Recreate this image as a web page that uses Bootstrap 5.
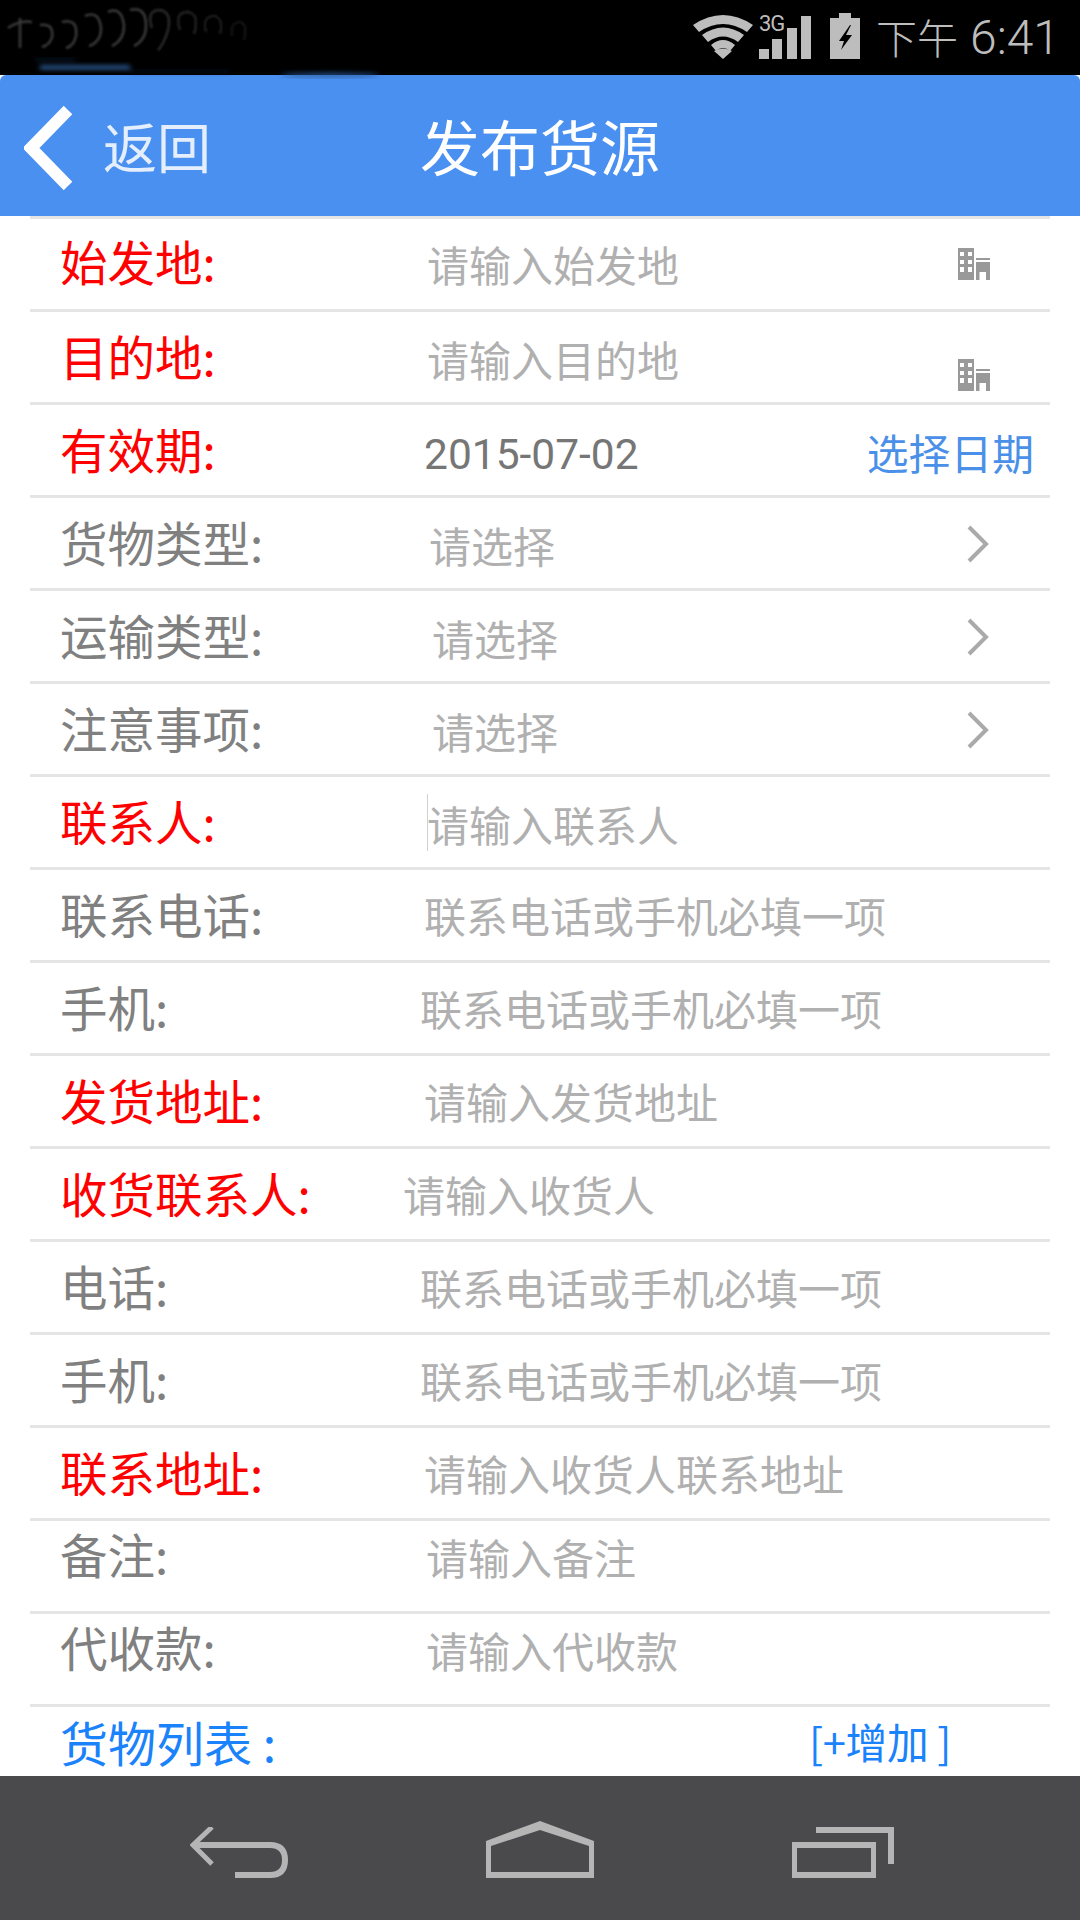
<!DOCTYPE html>
<html lang="zh-CN">
<head>
  <meta charset="UTF-8" />
  <title>发布货源</title>
  <link href="https://cdn.jsdelivr.net/npm/bootstrap@5.3.3/dist/css/bootstrap.min.css" rel="stylesheet">
  <style>
    html, body { width: 1080px; height: 1920px; overflow: hidden; background: #fff; }
    body { font-family: "Noto Sans CJK SC", "Liberation Sans", sans-serif; }

    .status-strip { height: 75px; background: #000; color: #bdbdbd; }
    .ghost-mark { left: 0; top: 0; }
    .wifi-ico { margin-right: 6px; }
    .net-lbl { font-family: "Roboto", sans-serif; font-size: 22px; line-height: 22px; width: 24px; margin-top: 13px; letter-spacing: -1px; }
    .sig-ico { margin-left: -24px; margin-right: 19px; }
    .bat-ico { margin-right: 16px; }
    .clock-txt { font-family: "Roboto", "Noto Sans CJK SC", sans-serif; font-weight: 300; font-size: 48px; line-height: 75px; width: 204px; white-space: nowrap; }
    .clock-cjk { font-size: 41px; margin-right: 12px; }

    .app-head { height: 141px; background: #4a90f0; border-radius: 6px 6px 0 0; color: #fff; }
    .head-side { width: 300px; }
    .back-arrow { margin-left: 24px; margin-top: 4px; }
    .back-txt { font-size: 54px; line-height: 1; margin-left: 29px; color: rgba(255, 255, 255, .85); }
    .head-title { font-size: 60px; line-height: 1; width: 480px; margin-bottom: 2px; }

    .form-wrap { height: 1560px; overflow: hidden; margin: 0 30px; }
    .fld-row { height: 93px; border-top: 3px solid #e5e5e5; padding-left: 30px; }
    .fld-lbl { width: 343px; font-size: 47.5px; line-height: 1; color: #808080; white-space: nowrap; margin-bottom: 3px; }
    .fld-lbl.must { color: #f00; }
    .fld-val { font-size: 42px; line-height: 1; color: #b0b0b0; white-space: nowrap; margin-top: 0; }
    .fld-val.filled { font-family: "Roboto", sans-serif; color: #767676; font-size: 42.5px; margin-top: 10px; }
    .caret-bar { left: 397px; top: 17px; width: 1px; height: 57px; background: #d0d0d0; }
    .pick-lnk { color: #4a90e8; font-size: 41.8px; line-height: 1; margin-top: 6px; }
    .blue-lbl { color: #1a82fb; font-size: 48px; margin-bottom: 0; }
    .add-lnk { color: #1a82fb; font-size: 41.8px; line-height: 1; letter-spacing: -.4px; margin-right: 99px; margin-top: 4px; }

    .off17 { margin-left: 17px; } .off21 { margin-left: 21px; } .off23 { margin-left: 23px; }
    .off24 { margin-left: 24px; } .off26 { margin-left: 26px; } .off29 { margin-left: 29px; }
    .nudge { margin-top: 4px; }
    .first-lbl { margin-bottom: 6px; }
    .first-val { margin-top: 0; }
    .lift-lbl { margin-top: -24px; margin-bottom: 0; }
    .lift-val { margin-top: -19px; }
    .end-ico { margin-right: 60px; }
    .chev-ico { margin-top: 2px; }
    .bld-low { margin-top: 35px; }
    .bld-top { margin-top: 0; }
    .cut-row { height: 72px; align-items: flex-start !important; padding-top: 10px; }

    .sys-nav { height: 144px; background: #4a4a4c; }
    .sys-back { margin-left: 190px; margin-top: 51px; }
    .sys-home { margin-left: 197px; margin-top: 45px; }
    .sys-rec { margin-left: 198px; margin-top: 51px; }
  </style>
</head>
<body class="d-flex flex-column">

<div class="status-strip d-flex justify-content-end align-items-start position-relative">
  <svg class="ghost-mark position-absolute" width="400" height="80" viewBox="0 0 400 80">
    <defs>
      <filter id="soft"><feGaussianBlur stdDeviation="1.2"/></filter>
      <filter id="softer"><feGaussianBlur stdDeviation="2.5"/></filter>
    </defs>
    <g fill="none" stroke="#3a3a3a" stroke-width="2.5" filter="url(#soft)">
      <path d="M8 28 q12 -8 24 -6 M20 18 v30"/>
      <path d="M40 25 q14 -2 12 12 q-2 8 -10 10"/>
      <path d="M62 22 q16 -4 14 14 q-2 10 -10 12"/>
      <path d="M85 16 q14 -6 16 12 q0 14 -12 18"/>
      <path d="M108 12 q14 -6 16 14 q0 14 -12 20"/>
      <path d="M130 10 q16 -4 16 16 q0 14 -12 20"/>
      <path d="M152 28 q-6 -18 8 -18 q12 2 8 20 q-4 14 -10 20" stroke="#2c2c2c"/>
      <path d="M180 30 q-6 -18 8 -18 q12 2 6 22" stroke="#222"/>
      <path d="M206 32 q-4 -16 8 -16 q10 2 6 18" stroke="#1c1c1c"/>
      <path d="M232 36 q-2 -14 8 -14 q8 2 4 18" stroke="#141414"/>
    </g>
    <g filter="url(#softer)">
      <rect x="40" y="66" width="90" height="3" fill="#3d7fd0"/>
      <rect x="35" y="59" width="40" height="1" fill="#1c3c6c"/>
      <rect x="130" y="71" width="100" height="1" fill="#12294a"/>
      <ellipse cx="330" cy="75" rx="50" ry="2" fill="#2a5a9a"/>
    </g>
  </svg>
  <svg class="wifi-ico" width="60" height="75" viewBox="0 0 60 75">
    <g fill="#bdbdbd">
      <path d="M0 25 Q30 5 60 25 L54 32 Q30 16 6 32 Z"/>
      <path d="M9 35 Q30 20 51 35 L45 42 Q30 31 15 42 Z"/>
      <path d="M18 45 Q30 35 42 45 L37 51 Q30 45 23 51 Z"/>
      <path d="M21 51 Q30 46 39 51 L30 59 Z" />
    </g>
  </svg>
  <div class="net-lbl">3G</div>
  <svg class="sig-ico" width="52" height="75" viewBox="0 0 52 75">
    <g fill="#bdbdbd">
      <rect x="0" y="49" width="10" height="10"/>
      <rect x="13" y="39" width="10" height="20"/>
      <rect x="28" y="28" width="10" height="31"/>
      <rect x="42" y="16" width="10" height="43"/>
    </g>
  </svg>
  <svg class="bat-ico" width="30" height="75" viewBox="0 0 30 75">
    <path fill="#bdbdbd" d="M9 13 H21 V18 H30 V59 H0 V18 H9 Z"/>
    <path fill="#000" d="M20 25 L9 41 H14 L11 50 L22 35 H16 L21 25 Z"/>
  </svg>
  <div class="clock-txt"><span class="clock-cjk">下午</span>6:41</div>
</div>

<div class="app-head d-flex align-items-center">
  <div class="head-side d-flex align-items-center">
    <svg class="back-arrow" width="50" height="84" viewBox="0 0 50 84">
      <path d="M44 4 L7 42 L44 80" fill="none" stroke="#fff" stroke-width="12"/>
    </svg>
    <span class="back-txt">返回</span>
  </div>
  <div class="head-title text-center">发布货源</div>
</div>

<div class="form-wrap">
  <div class="fld-row d-flex align-items-center">
    <div class="fld-lbl first-lbl must">始发地:</div>
    <div class="fld-val first-val off24 flex-grow-1">请输入始发地</div>
    <svg class="end-ico bld-top" width="32" height="32" viewBox="0 0 32 32"><use href="#bld"/></svg>
  </div>
  <div class="fld-row d-flex align-items-center">
    <div class="fld-lbl must">目的地:</div>
    <div class="fld-val nudge off24 flex-grow-1">请输入目的地</div>
    <svg class="end-ico bld-low" width="32" height="32" viewBox="0 0 32 32"><use href="#bld"/></svg>
  </div>
  <div class="fld-row d-flex align-items-center">
    <div class="fld-lbl must">有效期:</div>
    <div class="fld-val filled off21 flex-grow-1">2015-07-02</div>
    <a class="pick-lnk text-decoration-none me-3">选择日期</a>
  </div>
  <div class="fld-row d-flex align-items-center">
    <div class="fld-lbl">货物类型:</div>
    <div class="fld-val nudge off26 flex-grow-1">请选择</div>
    <svg class="end-ico chev-ico" width="24" height="38" viewBox="0 0 24 38"><path d="M3 2 L20 19 L3 36" fill="none" stroke="#aaa" stroke-width="4"/></svg>
  </div>
  <div class="fld-row d-flex align-items-center">
    <div class="fld-lbl">运输类型:</div>
    <div class="fld-val nudge off29 flex-grow-1">请选择</div>
    <svg class="end-ico chev-ico" width="24" height="38" viewBox="0 0 24 38"><path d="M3 2 L20 19 L3 36" fill="none" stroke="#aaa" stroke-width="4"/></svg>
  </div>
  <div class="fld-row d-flex align-items-center">
    <div class="fld-lbl">注意事项:</div>
    <div class="fld-val nudge off29 flex-grow-1">请选择</div>
    <svg class="end-ico chev-ico" width="24" height="38" viewBox="0 0 24 38"><path d="M3 2 L20 19 L3 36" fill="none" stroke="#aaa" stroke-width="4"/></svg>
  </div>
  <div class="fld-row d-flex align-items-center position-relative">
    <div class="fld-lbl must">联系人:</div>
    <div class="fld-val nudge off24">请输入联系人</div>
    <span class="caret-bar position-absolute"></span>
  </div>
  <div class="fld-row d-flex align-items-center">
    <div class="fld-lbl">联系电话:</div>
    <div class="fld-val off21">联系电话或手机必填一项</div>
  </div>
  <div class="fld-row d-flex align-items-center">
    <div class="fld-lbl">手机:</div>
    <div class="fld-val off17">联系电话或手机必填一项</div>
  </div>
  <div class="fld-row d-flex align-items-center">
    <div class="fld-lbl must">发货地址:</div>
    <div class="fld-val off21">请输入发货地址</div>
  </div>
  <div class="fld-row d-flex align-items-center">
    <div class="fld-lbl must">收货联系人:</div>
    <div class="fld-val">请输入收货人</div>
  </div>
  <div class="fld-row d-flex align-items-center">
    <div class="fld-lbl">电话:</div>
    <div class="fld-val off17">联系电话或手机必填一项</div>
  </div>
  <div class="fld-row d-flex align-items-center">
    <div class="fld-lbl">手机:</div>
    <div class="fld-val off17">联系电话或手机必填一项</div>
  </div>
  <div class="fld-row d-flex align-items-center">
    <div class="fld-lbl must">联系地址:</div>
    <div class="fld-val off21">请输入收货人联系地址</div>
  </div>
  <div class="fld-row d-flex align-items-center">
    <div class="fld-lbl lift-lbl">备注:</div>
    <div class="fld-val off23 lift-val">请输入备注</div>
  </div>
  <div class="fld-row d-flex align-items-center">
    <div class="fld-lbl lift-lbl">代收款:</div>
    <div class="fld-val off23 lift-val">请输入代收款</div>
  </div>
  <div class="fld-row cut-row d-flex justify-content-between">
    <div class="fld-lbl blue-lbl">货物列表 :</div>
    <a class="add-lnk text-decoration-none">[+增加 ]</a>
  </div>
</div>

<div class="sys-nav d-flex align-items-start">
  <svg class="sys-back" width="99" height="51" viewBox="0 0 99 51">
    <g fill="none" stroke="#b5b5b5">
      <path d="M22 0 L3 18 L22 37" stroke-width="5"/>
      <path d="M4 18 H80 Q95 18 95 33 Q95 48 80 48 H45" stroke-width="6"/>
    </g>
  </svg>
  <svg class="sys-home" width="108" height="57" viewBox="0 0 108 57">
    <path fill="#b5b5b5" fill-rule="evenodd" d="M54 0 L108 20 V57 H0 V20 Z M54 9 L103 25 V51 H5 V25 Z"/>
  </svg>
  <svg class="sys-rec" width="102" height="51" viewBox="0 0 102 51">
    <path fill="#b5b5b5" d="M24 0 H102 V37 H96 V6 H24 Z"/>
    <path fill="#b5b5b5" fill-rule="evenodd" d="M0 15 H84 V51 H0 Z M5 21 V45 H79 V21 Z"/>
  </svg>
</div>

<svg width="0" height="0" class="position-absolute">
  <defs>
    <g id="bld">
      <path fill="#999" fill-rule="evenodd" d="M0 0 H16 V32 H0 Z M2 4 V8 H6 V4 Z M10 4 V8 H14 V4 Z M2 12 V16 H6 V12 Z M10 12 V16 H14 V12 Z M2 19 V24 H6 V19 Z M10 19 V24 H14 V19 Z"/>
      <path fill="#999" fill-rule="evenodd" d="M18 10 H32 V12 H18 Z M18 14 H32 V32 H28 V24 H21.5 V32 H18 Z"/>
    </g>
  </defs>
</svg>

</body>
</html>
